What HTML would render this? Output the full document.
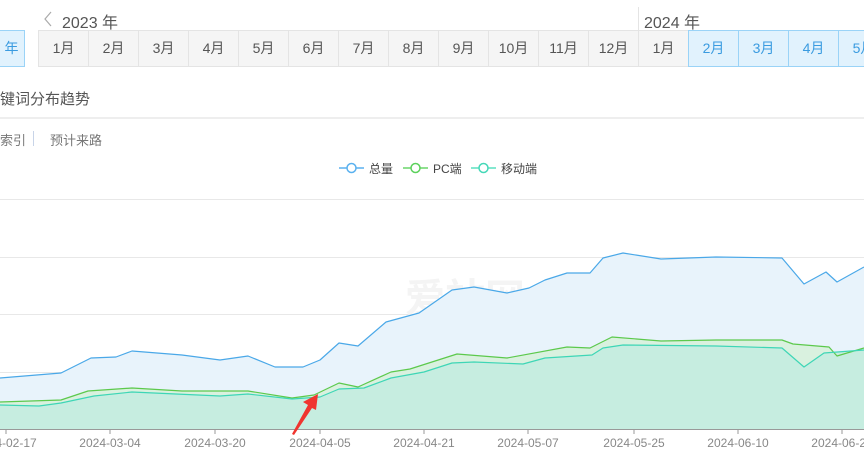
<!DOCTYPE html>
<html><head><meta charset="utf-8"><style>
body{margin:0;width:864px;height:452px;overflow:hidden;background:#fff;font-family:"Liberation Sans","Noto Sans CJK SC",sans-serif;position:relative;color:#555}
.a{position:absolute}
.cell{position:absolute;top:30px;height:35px;width:49px;border:1px solid #e4e4e4;border-left:none;background:#f5f5f5;text-align:center;line-height:35px;font-size:14px;color:#555}
.sel{background:#e1f2fd;border-color:#9ad3f7;color:#3a9be0;border-left:1px solid #9ad3f7}
</style></head><body>
<svg class="a" style="left:43px;top:11px" width="10" height="16"><path d="M8,1 L2,8 L8,15" fill="none" stroke="#aaa" stroke-width="1.2"/></svg>
<div class="a" style="left:62px;top:9px;font-size:16px;color:#555">2023 年</div>
<div class="a" style="left:638px;top:7px;width:1px;height:23px;background:#e4e4e4"></div>
<div class="a" style="left:644px;top:9px;font-size:16px;color:#555">2024 年</div>
<div class="cell sel" style="left:-1px;width:25px;border-left:none">年</div>
<div class="a" style="left:38px;top:30px;width:1px;height:37px;background:#e4e4e4"></div>
<div class="cell" style="left:39px">1月</div><div class="cell" style="left:89px">2月</div><div class="cell" style="left:139px">3月</div><div class="cell" style="left:189px">4月</div><div class="cell" style="left:239px">5月</div><div class="cell" style="left:289px">6月</div><div class="cell" style="left:339px">7月</div><div class="cell" style="left:389px">8月</div><div class="cell" style="left:439px">9月</div><div class="cell" style="left:489px">10月</div><div class="cell" style="left:539px">11月</div><div class="cell" style="left:589px">12月</div><div class="cell" style="left:639px">1月</div>
<div class="cell sel" style="left:688px">2月</div><div class="cell sel" style="left:738px">3月</div><div class="cell sel" style="left:788px">4月</div><div class="cell sel" style="left:838px">5月</div>
<div class="a" style="left:0;top:88px;font-size:15px;color:#555">键词分布趋势</div>
<div class="a" style="left:0;top:117px;width:864px;height:2px;background:#eee"></div>
<div class="a" style="left:0;top:130px;font-size:13px;color:#777">索引</div>
<div class="a" style="left:33px;top:131px;width:1px;height:15px;background:#c8d4e8"></div>
<div class="a" style="left:50px;top:130px;font-size:13px;color:#777">预计来路</div>
<svg class="a" style="left:0;top:0" width="864" height="452">
<g stroke-width="1.5" fill="#fff">
<line x1="339" y1="168" x2="364" y2="168" stroke="#5ab1ef"/><circle cx="351.5" cy="168" r="4.5" stroke="#5ab1ef"/>
<line x1="403" y1="168" x2="428" y2="168" stroke="#6ad66a"/><circle cx="415.5" cy="168" r="4.5" stroke="#5cd15c"/>
<line x1="471" y1="168" x2="496" y2="168" stroke="#5ce0c0"/><circle cx="483.5" cy="168" r="4.5" stroke="#45d8b8"/>
</g>
<text x="369" y="173" font-size="12" fill="#444">总量</text>
<text x="433" y="173" font-size="12" fill="#444">PC端</text>
<text x="501" y="173" font-size="12" fill="#444">移动端</text>
<g stroke="#e8e8e8" stroke-width="1"><line x1="0" y1="199.5" x2="864" y2="199.5"/><line x1="0" y1="257.5" x2="864" y2="257.5"/><line x1="0" y1="314.5" x2="864" y2="314.5"/><line x1="0" y1="372.5" x2="864" y2="372.5"/></g>
<text x="405" y="312" font-size="40" fill="#f4f4f4" font-weight="bold">爱站网</text>
<g stroke-linejoin="round" stroke-width="1.2">
<path d="M0,378 L61,373 L91,358 L116,357 L132,351 L182,355 L220,360 L248,356 L275,367 L303,367 L320,360 L339,343 L358,346 L386,322 L419,313 L452,290 L474,287 L507,293 L529,288 L545,280 L567,273 L590,273 L603,258 L623,253 L661,259 L716,257 L782,258 L804,284 L826,272 L837,282 L864,267 L864,430 L0,430Z" fill="#e8f3fb"/>
<path d="M0,402 L61,400 L88,391 L132,388 L182,391 L248,391 L292,398 L314,395 L339,383 L358,387 L391,372 L410,369 L457,354 L507,358 L567,347 L590,348 L612,337 L661,341 L716,340 L782,340 L793,344 L829,347 L837,356 L864,348 L864,430 L0,430Z" fill="#d9f1df"/>
<path d="M0,405 L39,406 L61,403 L94,396 L132,392 L220,396 L248,394 L292,399 L320,397 L339,389 L364,388 L391,378 L424,372 L452,363 L474,362 L523,364 L545,358 L592,355 L603,348 L623,345 L716,346 L782,348 L804,367 L824,353 L864,350 L864,430 L0,430Z" fill="#c6ede0"/>
<path d="M0,378 L61,373 L91,358 L116,357 L132,351 L182,355 L220,360 L248,356 L275,367 L303,367 L320,360 L339,343 L358,346 L386,322 L419,313 L452,290 L474,287 L507,293 L529,288 L545,280 L567,273 L590,273 L603,258 L623,253 L661,259 L716,257 L782,258 L804,284 L826,272 L837,282 L864,267" fill="none" stroke="#4aa8e8"/>
<path d="M0,402 L61,400 L88,391 L132,388 L182,391 L248,391 L292,398 L314,395 L339,383 L358,387 L391,372 L410,369 L457,354 L507,358 L567,347 L590,348 L612,337 L661,341 L716,340 L782,340 L793,344 L829,347 L837,356 L864,348" fill="none" stroke="#5cc94c"/>
<path d="M0,405 L39,406 L61,403 L94,396 L132,392 L220,396 L248,394 L292,399 L320,397 L339,389 L364,388 L391,378 L424,372 L452,363 L474,362 L523,364 L545,358 L592,355 L603,348 L623,345 L716,346 L782,348 L804,367 L824,353 L864,350" fill="none" stroke="#3ed6b6"/>
</g>
<line x1="0" y1="429.5" x2="864" y2="429.5" stroke="#999"/>
<g stroke="#999"><line x1="6" y1="430" x2="6" y2="434"/><line x1="110" y1="430" x2="110" y2="434"/><line x1="215" y1="430" x2="215" y2="434"/><line x1="320" y1="430" x2="320" y2="434"/><line x1="424" y1="430" x2="424" y2="434"/><line x1="528" y1="430" x2="528" y2="434"/><line x1="634" y1="430" x2="634" y2="434"/><line x1="738" y1="430" x2="738" y2="434"/><line x1="842" y1="430" x2="842" y2="434"/></g>
<g font-size="12" fill="#888" text-anchor="middle"><text x="6" y="447">2024-02-17</text><text x="110" y="447">2024-03-04</text><text x="215" y="447">2024-03-20</text><text x="320" y="447">2024-04-05</text><text x="424" y="447">2024-04-21</text><text x="528" y="447">2024-05-07</text><text x="634" y="447">2024-05-25</text><text x="738" y="447">2024-06-10</text><text x="842" y="447">2024-06-26</text></g>
<path d="M292,434 L308,405 L303,402 L318,394 L316,410 L312,408 L294,435Z" fill="#f0352f"/>
</svg>
</body></html>
